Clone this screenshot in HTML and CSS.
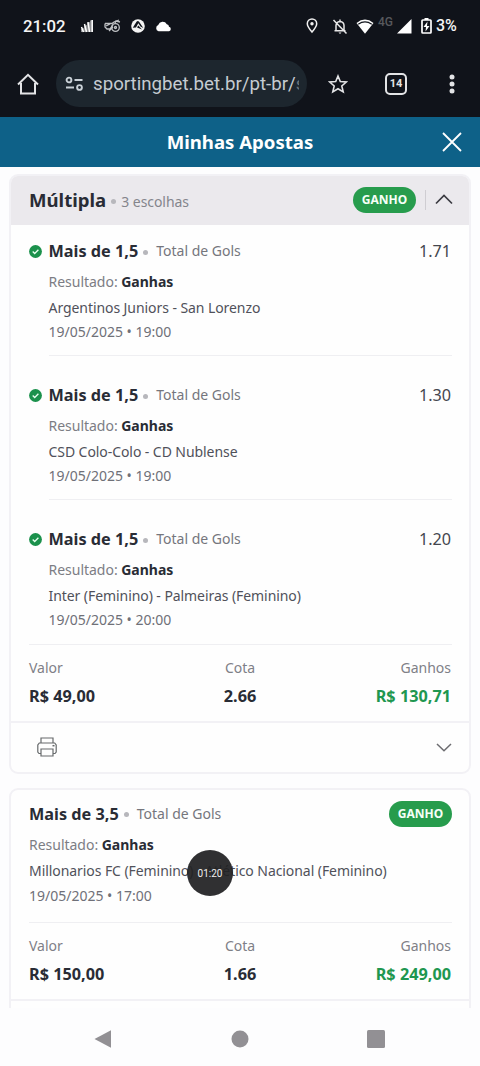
FILE: index.html
```html
<!DOCTYPE html>
<html lang="pt-BR">
<head>
<meta charset="utf-8">
<title>Minhas Apostas</title>
<link rel="stylesheet" href="styles.css">
</head>
<body>
<div class="phone">
  <div class="chrome">
    <div class="status">
      <span class="clock">21:02</span>
      <div class="status-left">
        <svg width="14" height="14" viewBox="0 0 14 14"><path d="M1 13V10L4 9V7L7 6V4L10 3V1.500L13 1V13Z" fill="#8d8e91"/><path d="M3.500 13 1.500 8M6.500 13 4.500 5M9.500 13 8 3M12.200 13V1" stroke="#fff" stroke-width="1.500"/></svg>
        <svg width="17" height="14" viewBox="0 0 17 14" fill="none" stroke="#bfc1c4" stroke-width="1.300"><path d="M1 4.500H8L10 3 15 1M1 4.500V8L3 10H6L9 6M2 7 6 5M5 12 9 8"/><circle cx="11.500" cy="8.500" r="3.800"/><circle cx="11.500" cy="8.500" r="1"/><path d="M11 4 12 2 16 3"/></svg>
        <svg width="14" height="14" viewBox="0 0 14 14"><circle cx="7" cy="7" r="6.800" fill="#f4f4f4"/><path d="M1.800 8.800Q4 5 5.700 2.500 7 1.300 8.300 3L12.300 9 9.500 7.500 7.300 4.300 5 8.500ZM6 8.500 7.300 6.500 11 10.500Z" fill="#11151c"/></svg>
        <svg width="17" height="11" viewBox="0 0 17 11"><path d="M3.500 10.200A3.300 3.300 0 0 1 3.200 4 4.700 4.700 0 0 1 11.800 3.300 2.600 2.600 0 0 1 14 5.700 2.300 2.300 0 0 1 14 10.200Z" fill="#fff"/></svg>
      </div>
      <div class="status-right">
        <svg class="pin" width="12" height="16" viewBox="0 0 12 16" fill="none" stroke="#f1f1f1" stroke-width="1.500"><path d="M6 14C3 10.500 1.300 8 1.300 5.700A4.700 4.700 0 0 1 10.700 5.700C10.700 8 9 10.500 6 14Z"/><circle cx="6" cy="5.700" r="1.700" fill="#f1f1f1" stroke="none"/></svg>
        <svg class="bell" width="16" height="17" viewBox="0 0 16 17" fill="none" stroke="#e8e8e8" stroke-width="1.500"><path d="M4 12.500V7.500Q4 4 8 3.500 12 4 12 7.500V12.500M2.500 12.700H13.500M8 3.500V1.500M1.500 2 14.500 15.500"/><path d="M6.500 14.500H9.500L8 16Z" fill="#e8e8e8" stroke="none"/></svg>
        <svg class="wifi" width="18" height="15" viewBox="0 0 18 15"><path d="M.5 4Q9-2.800 17.500 4L9 14.700Z" fill="#fff"/><path d="M2.200 5.200Q9 .5 15.800 5.200" fill="none" stroke="#11151c" stroke-width="1.200"/></svg>
        <span class="net">4G</span>
        <svg class="signal" width="15" height="15" viewBox="0 0 15 15"><path d="M0 14.500 14.500 0V14.500Z" fill="#fff"/></svg>
        <svg class="battery" width="11" height="16" viewBox="0 0 11 16"><path d="M3.500 0H7.500V2H3.500Z" fill="#fff"/><rect x="1" y="2" width="9" height="13" rx=".7" fill="none" stroke="#fff" stroke-width="1.700"/><path d="M6.500 3.500 2.500 9H5L4.500 13.500 8.500 8H6Z" fill="#fff"/></svg>
        <span class="percent">3%</span>
      </div>
    </div>
    <div class="toolbar">
      <svg class="home" width="22" height="22" viewBox="0 0 22 22" fill="none" stroke="#e3e4e6" stroke-width="2"><path d="M4 10V20.500H18V10M1 11.500 11 1.800 21 11.500"/></svg>
      <div class="url">
        <svg width="19" height="16" viewBox="0 0 19 16" fill="none" stroke="#c9d0d6" stroke-width="1.900"><circle cx="4" cy="4" r="2.400"/><path d="M9.500 4H17.500M1 11.500H9"/><circle cx="14.500" cy="11.500" r="2.400"/></svg>
        <span class="address">sportingbet.bet.br/pt-br/<span class="cut">s</span></span>
      </div>
      <svg class="star" width="20" height="20" viewBox="0 0 20 20" fill="none" stroke="#e3e4e6" stroke-width="1.600"><path d="M10 2 12.300 7.500 18.300 8 13.800 12 15.200 17.900 10 14.700 4.800 17.900 6.200 12 1.700 8 7.700 7.500Z"/></svg>
      <span class="tabs">14</span>
      <svg class="more" width="6" height="20" viewBox="0 0 6 20" fill="#e3e4e6"><circle cx="3" cy="3" r="2.500"/><circle cx="3" cy="10" r="2.500"/><circle cx="3" cy="17" r="2.500"/></svg>
    </div>
  </div>

  <header class="title-bar">
    <h1>Minhas Apostas</h1>
    <svg width="20" height="20" viewBox="0 0 20 20" fill="none" stroke="#fff" stroke-width="1.800"><path d="M1 1 19 19M19 1 1 19"/></svg>
  </header>

  <main class="bets">
    <section class="card">
      <div class="card-head">
        <b class="kind">Múltipla</b><i class="dot"></i><span class="choices">3 escolhas</span>
        <span class="badge">GANHO</span>
        <i class="rule"></i>
        <svg width="18" height="11" viewBox="0 0 18 11" fill="none" stroke="#3b3b42" stroke-width="1.700"><path d="M1 9.500 9 1.500 17 9.500"/></svg>
      </div>
      <article class="leg">
        <div class="pick"><svg class="check" width="13" height="13" viewBox="0 0 13 13"><circle cx="6.500" cy="6.500" r="6.400" fill="#1b914c"/><path d="M3.700 6.500 5.700 8.500 9.400 4.800" fill="none" stroke="#e8fff0" stroke-width="1.300"/></svg><b>Mais de 1,5</b><i class="dot"></i><span class="market">Total de Gols</span><span class="odd">1.71</span></div>
        <div class="details"><p class="result">Resultado: <b>Ganhas</b></p><p class="match">Argentinos Juniors - San Lorenzo</p><p class="date">19/05/2025 • 19:00</p></div>
      </article>
      <article class="leg">
        <div class="pick"><svg class="check" width="13" height="13" viewBox="0 0 13 13"><circle cx="6.500" cy="6.500" r="6.400" fill="#1b914c"/><path d="M3.700 6.500 5.700 8.500 9.400 4.800" fill="none" stroke="#e8fff0" stroke-width="1.300"/></svg><b>Mais de 1,5</b><i class="dot"></i><span class="market">Total de Gols</span><span class="odd">1.30</span></div>
        <div class="details"><p class="result">Resultado: <b>Ganhas</b></p><p class="match">CSD Colo-Colo - CD Nublense</p><p class="date">19/05/2025 • 19:00</p></div>
      </article>
      <article class="leg last">
        <div class="pick"><svg class="check" width="13" height="13" viewBox="0 0 13 13"><circle cx="6.500" cy="6.500" r="6.400" fill="#1b914c"/><path d="M3.700 6.500 5.700 8.500 9.400 4.800" fill="none" stroke="#e8fff0" stroke-width="1.300"/></svg><b>Mais de 1,5</b><i class="dot"></i><span class="market">Total de Gols</span><span class="odd">1.20</span></div>
        <div class="details"><p class="result">Resultado: <b>Ganhas</b></p><p class="match">Inter (Feminino) - Palmeiras (Feminino)</p><p class="date">19/05/2025 • 20:00</p></div>
      </article>
      <div class="totals">
        <div><span>Valor</span><b>R$ 49,00</b></div>
        <div><span>Cota</span><b>2.66</b></div>
        <div><span>Ganhos</span><b class="won">R$ 130,71</b></div>
      </div>
      <div class="card-foot">
        <svg width="20" height="20" viewBox="0 0 20 20" fill="none" stroke="#66696b" stroke-width="1.200"><path d="M4 6V1H16V6M4 16.500H2L.8 15V8L2.300 6H17.700L19.200 8V15L18 16.500H16M4 12H16V19H4Z"/><path d="M15.500 8.700H17.500" stroke-width="1.500"/></svg>
        <svg width="16" height="9" viewBox="0 0 16 9" fill="none" stroke="#6c6c70" stroke-width="1.500"><path d="M1 1 8 7.800 15 1"/></svg>
      </div>
    </section>

    <section class="card second">
      <article class="leg single">
        <div class="pick"><b>Mais de 3,5</b><i class="dot"></i><span class="market">Total de Gols</span><span class="badge">GANHO</span></div>
        <div class="details"><p class="result">Resultado: <b>Ganhas</b></p><p class="match">Millonarios FC (Feminino) - Atlético Nacional (Feminino)</p><p class="date">19/05/2025 • 17:00</p></div>
      </article>
      <div class="totals">
        <div><span>Valor</span><b>R$ 150,00</b></div>
        <div><span>Cota</span><b>1.66</b></div>
        <div><span>Ganhos</span><b class="won">R$ 249,00</b></div>
      </div>
    </section>
  </main>

  <nav class="system-nav">
    <svg width="20" height="20" viewBox="0 0 20 20"><path d="M.5 10 17 1.300V18.700Z" fill="#929094"/></svg>
    <svg width="18" height="18" viewBox="0 0 18 18"><circle cx="9" cy="9" r="8.500" fill="#929094"/></svg>
    <svg width="18" height="18" viewBox="0 0 18 18"><rect width="18" height="18" rx="1.500" fill="#929094"/></svg>
  </nav>
  <div class="recorder">01:20</div>
</div>
</body>
</html>
```
FILE: styles.css
```css
* { box-sizing: border-box; }
body { margin: 0; background: #fdfdfe; font-family: "Noto Sans", sans-serif; color: #292c35; }
svg { display: block; flex: none; }
p, h1 { margin: 0; }
.phone { position: relative; width: 480px; height: 1066px; overflow: hidden; display: flex; flex-direction: column; }

.chrome { height: 117px; flex: none; background: #10131a; font-family: Roboto, sans-serif; }
.status { height: 52px; display: flex; align-items: center; padding: 0 22px 0 23px; color: #f5f5f5; }
.clock { width: 57px; font-size: 16.800px; font-weight: 500; white-space: nowrap; }
.status-left { display: flex; align-items: center; gap: 10px; }
.status-right { margin-left: auto; display: flex; align-items: center; }
.bell { margin-left: 14px; }
.wifi { margin-left: 8px; }
.net { width: 16px; margin: -9px 0 0 4px; font-size: 12px; font-weight: 500; line-height: 14px; color: #57595d; }
.signal { margin-left: 3px; }
.battery { margin-left: 9px; }
.percent { width: 22px; margin-left: 4px; font-size: 16px; font-weight: 500; line-height: 20px; }
.toolbar { height: 65px; display: flex; align-items: center; padding: 0 25px 2px 17px; }
.url { width: 251px; height: 47px; margin-left: 17px; padding: 0 7px 0 9px; border-radius: 24px; background: #1d262e; display: flex; align-items: center; gap: 9px; overflow: hidden; }
.address { width: 206px; overflow: hidden; white-space: nowrap; font-size: 18.700px; line-height: 26px; color: #c5cbd1; }
.cut { color: #69727a; }
.star { margin-left: 21px; }
.tabs { width: 22px; height: 22px; margin-left: 37px; border: 2px solid #e3e4e6; border-radius: 5px; text-align: center; font-size: 11px; font-weight: 700; line-height: 18px; color: #e3e4e6; }
.more { margin-left: auto; }

.title-bar { height: 50px; flex: none; background: #0e6188; color: #fff; display: grid; grid-template-columns: 28px 1fr 28px; align-items: center; padding: 0 10px 1px; }
.title-bar h1 { grid-column: 2; text-align: center; font-size: 18.600px; font-weight: 700; line-height: 26px; }
.title-bar svg { justify-self: end; margin-right: 8px; }

.bets { height: 841px; flex: none; overflow: hidden; padding: 7px 9px 0; }
.card { width: 462px; border: 2px solid #f2f1f5; border-radius: 9px; background: #fefefe; overflow: hidden; }
.second { height: 240px; margin-top: 14px; }
.card-head { height: 51px; margin: -2px -2px 0; background: #ebe9ed; display: flex; align-items: center; padding: 0 18px 0 20px; }
.kind { font-size: 18.600px; line-height: 26px; }
.dot { width: 5px; height: 5px; flex: none; border-radius: 50%; background: #b7b7bc; }
.card-head .dot { margin: 3px 5px 0; }
.choices { padding-top: 3px; font-size: 14px; letter-spacing: -.05px; color: #84858c; }
.badge { width: 63px; height: 26px; flex: none; margin-left: auto; border-radius: 13px; background: #279c4d; color: #f5fff7; text-align: center; font-size: 12px; font-weight: 700; line-height: 25px; }
.rule { width: 1px; height: 20px; margin: 0 9px; background: #cfcdd2; }

.leg { padding: 13px 17px 0 18px; margin-bottom: 13.200px; }
.pick { height: 26px; display: flex; align-items: center; font-size: 16.250px; line-height: 26px; white-space: nowrap; }
.check { margin: 1px 7px 0 -.5px; }
.pick .dot { margin: 2px 8px 0 5px; }
.market { font-size: 14px; color: #75767d; }
.odd { margin-left: auto; margin-right: 1px; font-size: 16.200px; color: #44464e; }
.details { margin-left: 19.500px; padding-top: 5px; padding-bottom: 12px; border-bottom: 1px solid #efeff2; font-size: 14px; white-space: nowrap; }
.result { line-height: 26px; letter-spacing: -.02px; color: #7c7d84; }
.result b { color: #292c35; }
.match { line-height: 26px; letter-spacing: -.07px; color: #50515a; }
.date { line-height: 22px; color: #6f7078; }
.last { margin-bottom: 0; }
.last .match { line-height: 25px; }
.last .date { line-height: 23px; }
.last .details { margin-left: 0; padding-left: 19.500px; padding-bottom: 12.500px; }
.single { padding-top: 11px; margin-bottom: 0; }
.single .details { margin-left: 0; padding-top: 5px; padding-bottom: 14px; }
.single .date { line-height: 24px; }

.totals { height: 78px; display: grid; grid-template-columns: 1fr 1fr 1fr; padding: 10px 18px 0; border-bottom: 2px solid #f2f1f5; }
.totals div { display: flex; flex-direction: column; text-align: center; }
.totals div:first-child { text-align: left; }
.totals div:last-child { text-align: right; }
.totals span { font-size: 14px; line-height: 26px; color: #7f8087; }
.totals b { font-size: 16.250px; line-height: 30px; }
.totals .won { color: #1f9750; }
.card-foot { height: 49px; display: flex; align-items: center; justify-content: space-between; padding: 0 17px 0 26px; }

.system-nav { height: 58px; flex: none; display: grid; grid-template-columns: 1fr 1fr 1fr; justify-items: center; align-items: center; padding: 3px 36px 0; }
.recorder { position: absolute; left: 187px; top: 850px; width: 46px; height: 46px; border-radius: 50%; background: rgba(32, 32, 34, .93); color: #efefef; text-align: center; font: 10px/47px Roboto, sans-serif; }
```
